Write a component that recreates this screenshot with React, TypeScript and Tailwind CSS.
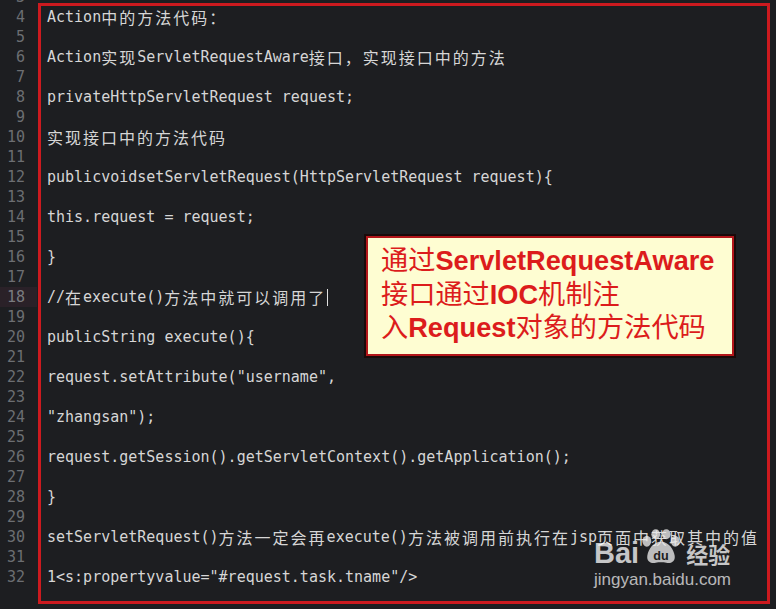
import React from "react";

const lines: { n: number; t: string }[] = [
  { n: 3, t: "" },
  { n: 4, t: "Action中的方法代码：" },
  { n: 5, t: "" },
  { n: 6, t: "Action实现ServletRequestAware接口，实现接口中的方法" },
  { n: 7, t: "" },
  { n: 8, t: "privateHttpServletRequest request;" },
  { n: 9, t: "" },
  { n: 10, t: "实现接口中的方法代码" },
  { n: 11, t: "" },
  { n: 12, t: "publicvoidsetServletRequest(HttpServletRequest request){" },
  { n: 13, t: "" },
  { n: 14, t: "this.request = request;" },
  { n: 15, t: "" },
  { n: 16, t: "}" },
  { n: 17, t: "" },
  { n: 18, t: "//在execute()方法中就可以调用了" },
  { n: 19, t: "" },
  { n: 20, t: "publicString execute(){" },
  { n: 21, t: "" },
  { n: 22, t: 'request.setAttribute("username",' },
  { n: 23, t: "" },
  { n: 24, t: '"zhangsan");' },
  { n: 25, t: "" },
  { n: 26, t: "request.getSession().getServletContext().getApplication();" },
  { n: 27, t: "" },
  { n: 28, t: "}" },
  { n: 29, t: "" },
  { n: 30, t: "setServletRequest()方法一定会再execute()方法被调用前执行在jsp页面中获取其中的值" },
  { n: 31, t: "" },
  { n: 32, t: '1<s:propertyvalue="#request.task.tname"/>' },
];

function Mixed({ text }: { text: string }) {
  const parts = text.split(/([\u3000-\u9fff\uff00-\uffef]+)/).filter((p) => p.length > 0);
  return (
    <>
      {parts.map((p, i) =>
        /[\u3000-\u9fff\uff00-\uffef]/.test(p) ? (
          <span key={i} className="font-['Noto_Sans_CJK_SC',sans-serif] text-[16px] tracking-[2px]">
            {p}
          </span>
        ) : (
          <span key={i}>{p}</span>
        )
      )}
    </>
  );
}

function Paw() {
  return (
    <svg width="42" height="38" viewBox="0 0 40 34">
      <g fill="rgba(235,235,235,0.78)">
        <ellipse cx="6.5" cy="11.5" rx="4.2" ry="5.2" />
        <ellipse cx="15" cy="4.8" rx="4.2" ry="4.8" />
        <ellipse cx="25" cy="4.8" rx="4.2" ry="4.8" />
        <ellipse cx="33.5" cy="11.5" rx="4.2" ry="5.2" />
        <path d="M20 12 C12 12 8 20 7 25 C6 31 11 33 15 32 C18 31.5 22 31.5 25 32 C29 33 34 31 33 25 C32 20 28 12 20 12 Z" />
      </g>
      <text x="20" y="29" textAnchor="middle" fontFamily="Liberation Sans, sans-serif" fontWeight="bold" fontSize="12" fill="#1d1e21">du</text>
    </svg>
  );
}

export default function App() {
  return (
    <div className="relative w-[776px] h-[609px] overflow-hidden bg-[#1d1e21] font-['DejaVu_Sans_Mono','Liberation_Mono',monospace] text-[15px]">
      <div className="flex flex-col -mt-[13px]">
        {lines.map((l) => (
          <div key={l.n} className="flex h-[20px] items-center leading-[20px]">
            <div
              className={
                l.n === 18
                  ? "w-[37px] h-[20px] shrink-0 pr-[12px] text-right text-[#7a7c80] bg-[#2a2128]"
                  : "w-[37px] h-[20px] shrink-0 pr-[12px] text-right text-[#6c6e72]"
              }
            >
              {l.n}
            </div>
            <div className="pl-[10px] whitespace-pre text-[#d6d6d6] flex items-center">
              <Mixed text={l.t} />
              {l.n === 18 && <span className="inline-block w-[1px] h-[17px] bg-[#e0e0e0] ml-[1px]" />}
            </div>
          </div>
        ))}
      </div>

      {/* red annotation frame */}
      <div className="absolute left-[38px] top-[3px] w-[732px] h-[601px] border-[3px] border-[#cc1a1f] pointer-events-none" />

      {/* callout */}
      <div className="absolute left-[364px] top-[234px] w-[372px] h-[124px] border-2 border-[#1a0a0a]">
        <div className="w-full h-full border-2 border-[#b3161a] bg-[#fefdd2] pl-[13px] pt-[6px] font-['Liberation_Sans','Noto_Sans_CJK_SC',sans-serif] text-[27.2px] leading-[33.5px] text-[#dc1c1c]">
          <div>通过<b>ServletRequestAware</b></div>
          <div>接口通过<b>IOC</b>机制注</div>
          <div>入<b>Request</b>对象的方法代码</div>
        </div>
      </div>

      {/* baidu watermark */}
      <div className="absolute left-[594px] top-[530px] flex flex-col items-start">
        <div className="flex items-end h-[38px]">
          <span className="font-['Liberation_Sans',sans-serif] font-bold text-[29px] leading-[30px] text-white/75">Bai</span>
          <span className="ml-[1px] mb-[2px]"><Paw /></span>
          <span className="ml-[4px] font-['Noto_Sans_CJK_SC',sans-serif] font-bold text-[22px] leading-[30px] text-white/75">经验</span>
        </div>
        <div className="mt-[2px] font-['Liberation_Sans',sans-serif] text-[17px] leading-[20px] text-white/70">jingyan.baidu.com</div>
      </div>
    </div>
  );
}
